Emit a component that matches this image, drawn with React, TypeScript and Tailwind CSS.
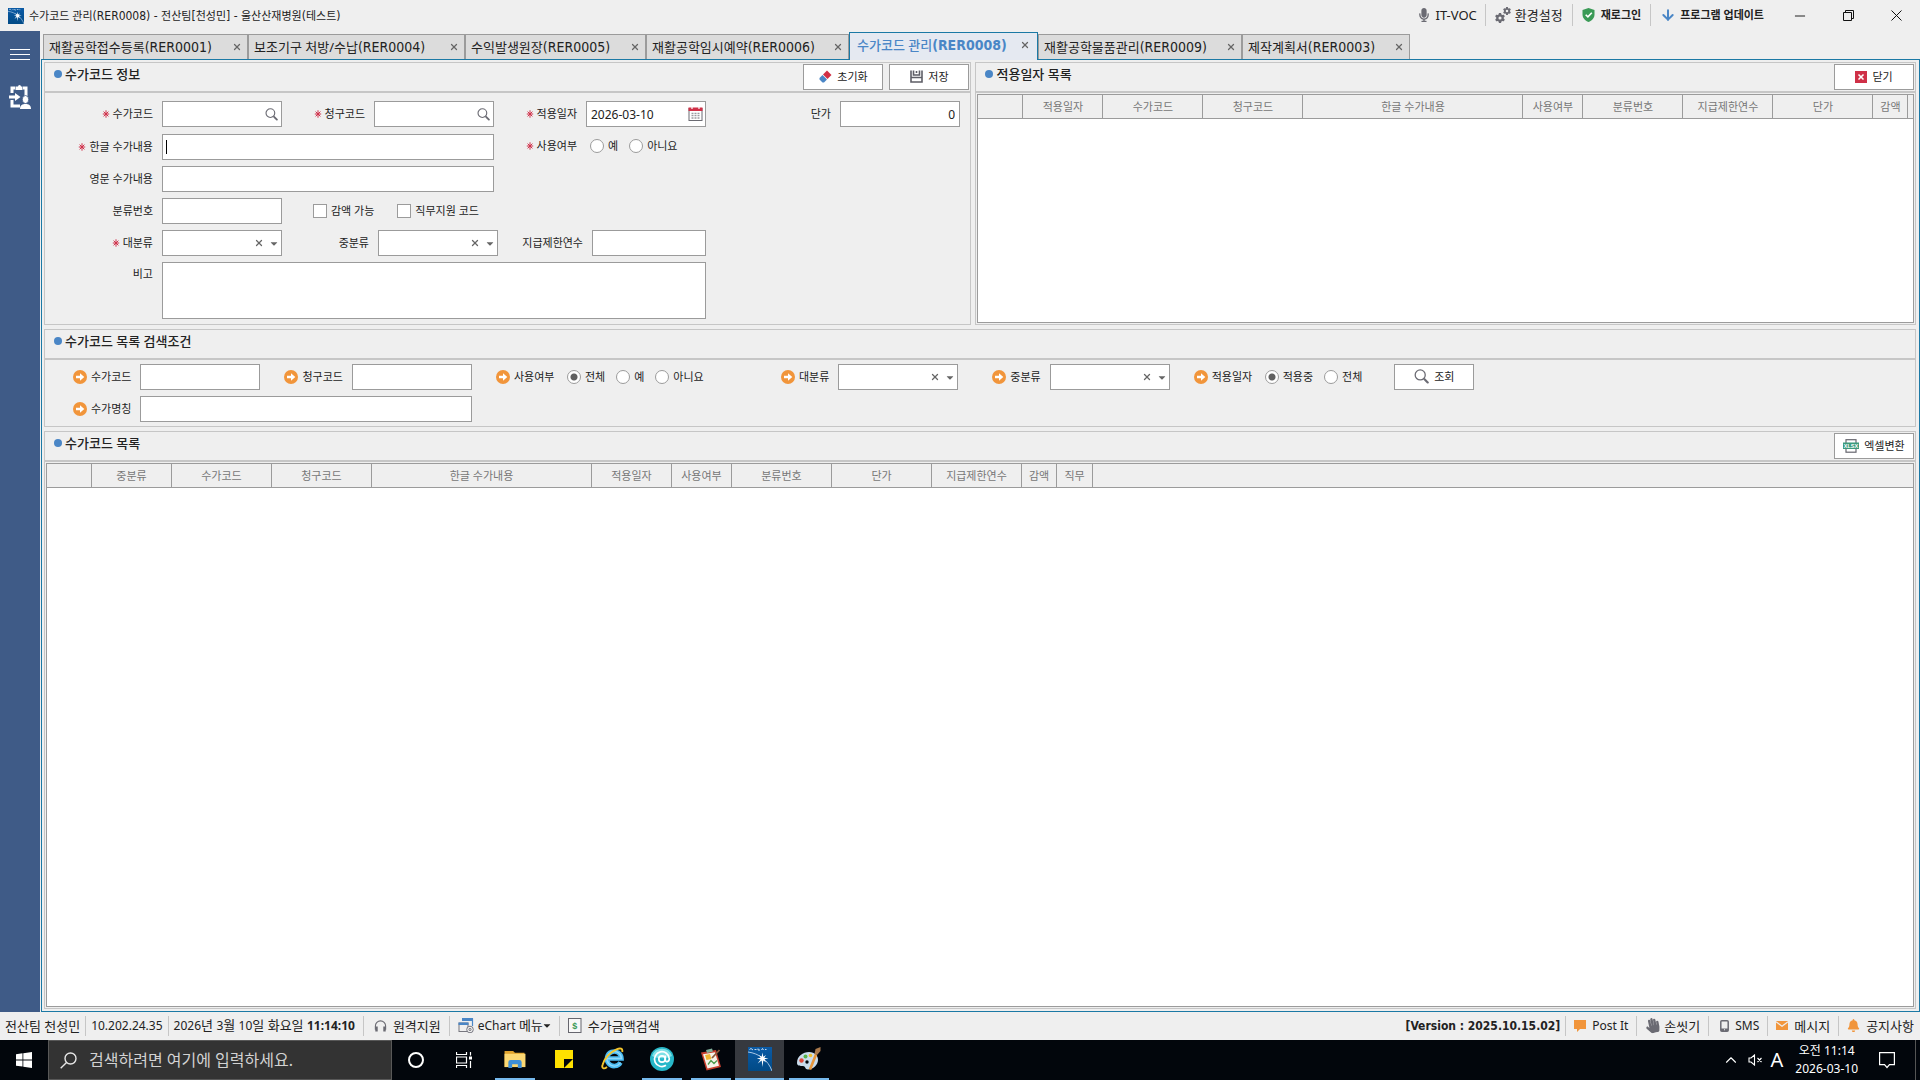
import type { ReactNode } from "react";
import { ArrowDown, X, Minus, ChevronUp } from "lucide-react";
import { FaMicrophone, FaHandPaper, FaBell, FaCaretDown } from "react-icons/fa";
import { FaGear } from "react-icons/fa6";

/* ---------- icons ---------- */

function AppIcon({ className }: { className: string }) {
  return (
    <svg viewBox="0 0 24 24" className={className} aria-hidden="true">
      <defs>
        <linearGradient id="appBlue" x1="0" y1="0" x2="0" y2="1">
          <stop offset="0" stopColor="#0b5ba6" />
          <stop offset="1" stopColor="#014a86" />
        </linearGradient>
      </defs>
      <rect width="24" height="24" fill="url(#appBlue)" />
      <path d="M1.500 2.500l1.500-1 2 1.500M6.500 2.500h2M10 1.500v1.500h2M13.500 3l1-1.500 1 1.500M17 2.500h1.500" stroke="#dcebf8" strokeWidth=".9" fill="none" />
      <path d="M0 5c11 1.500 20 8 24 19" stroke="#a9c6e4" strokeWidth="1" fill="none" />
      <path d="M14.500 5.500l.8 4.200 2.700-1.700-1.700 2.700 4.200.8-4.200.8 2 3.200-3-2-.8 6.500-.8-6.500-4 3 2.900-4.100-3.800-.9 3.800-.8-1.700-2.700 2.800 1.700z" fill="#fff" />
    </svg>
  );
}

function Asterisk() {
  return (
    <svg viewBox="0 0 8 8" className="h-[8px] w-[8px] shrink-0" stroke="#d0304a" aria-hidden="true">
      <path d="M4 .3v7.400M.8 4h6.400M1.600 1.600l4.800 4.800M6.400 1.600L1.600 6.400" />
    </svg>
  );
}

function Lens({ className }: { className: string }) {
  return (
    <svg viewBox="0 0 14 14" className={className} fill="none" stroke="#6b6b73" strokeLinecap="round" aria-hidden="true">
      <circle cx="5.800" cy="5.500" r="4.700" strokeWidth="1.200" />
      <path d="M9.800 9.500l3 3" strokeWidth="2" />
    </svg>
  );
}

function GearPair() {
  return (
    <span className="relative h-[16px] w-[16px] text-[#6b6b73]">
      <FaGear className="absolute bottom-0 left-0 h-[10px] w-[10px]" />
      <FaGear className="absolute top-0 right-0 h-[8px] w-[8px]" />
    </span>
  );
}

function ShieldIcon() {
  return (
    <svg viewBox="0 0 13 14" className="h-[14px] w-[13px]" aria-hidden="true">
      <path d="M6.500 0l6 2v4.500c0 3.500-2.500 6-6 7.500-3.500-1.500-6-4-6-7.500V2z" fill="#3a9a56" />
      <path d="M3.700 6.700l2.200 2.200 3.900-4.100" fill="none" stroke="#fff" strokeWidth="1.600" />
    </svg>
  );
}

function EraserIcon() {
  return (
    <svg viewBox="0 0 13 13" className="h-[13px] w-[13px]" aria-hidden="true">
      <path d="M8 .5L12.500 5 8.500 9 4 4.500z" fill="#d22f45" />
      <path d="M3.500 5L8 9.500 5 12.500H3.500L.5 9.500V8z" fill="#4a86c6" />
    </svg>
  );
}

function SaveIcon() {
  return (
    <svg viewBox="0 0 13 13" className="h-[13px] w-[13px]" fill="none" stroke="#5e5e66" strokeWidth="1.600" aria-hidden="true">
      <path d="M1 .5v11.500h11V.5M3.500.5v4.500h6V.5M1 7.500h11M6.500 1v2" />
    </svg>
  );
}

function CalendarIcon() {
  return (
    <svg viewBox="0 0 15 15" className="h-[15px] w-[15px]" aria-hidden="true">
      <rect x="1" y="2.500" width="13" height="12" fill="#fff" stroke="#6b6b72" />
      <path d="M.5 1.500h14v3.500H.5z" fill="#cf3047" />
      <path d="M4 0v3M11 0v3" stroke="#fff" strokeWidth="1.200" />
      <path d="M3.500 7.500h8M3.500 9.700h8M3.500 12h8" stroke="#9a9aa0" strokeWidth="1.300" strokeDasharray="2 1" />
    </svg>
  );
}

function ExcelIcon() {
  return (
    <svg viewBox="0 0 16 14" className="h-[14px] w-[16px]" aria-hidden="true">
      <rect x="3" y=".7" width="10" height="12.500" fill="#fff" stroke="#66666e" strokeWidth="1.200" />
      <rect x="0" y="3.500" width="16" height="6.500" fill="#3c9a7c" />
      <text x="8" y="8.700" fontSize="5.500" fontWeight="700" textAnchor="middle" fill="#fff" fontFamily="Liberation Sans">XLSX</text>
    </svg>
  );
}

function ArrowBullet() {
  return (
    <svg viewBox="0 0 14 14" className="h-[14px] w-[14px] shrink-0" aria-hidden="true">
      <circle cx="7" cy="7" r="7" fill="#f1953b" />
      <path d="M3 5.800h4V3.200L11.300 7 7 10.800V8.200H3z" fill="#fff" />
    </svg>
  );
}

function ProgramIcon() {
  return (
    <svg viewBox="0 0 22 24" className="h-[24px] w-[22px]" aria-hidden="true">
      <path d="M3 8V3h3M3 15v6h8M14 3h3v8" fill="none" stroke="#fff" strokeWidth="3" />
      <path d="M6.500 1.500h2.500a1.500 1.500 0 0 1 3 0h1.500V5h-7z" fill="#fff" />
      <path d="M0 10.500h6V8l5.500 4L6 16v-2.500H0z" fill="#fff" />
      <ellipse cx="16.500" cy="14.500" rx="3.200" ry="4" fill="#fff" stroke="#3f5b87" strokeWidth=".8" />
      <path d="M11 24c0-4 2.500-5 5.500-5s5.500 1 5.500 5z" fill="#fff" />
    </svg>
  );
}

function HeadphoneIcon() {
  return (
    <svg viewBox="0 0 14 14" className="h-[14px] w-[13px]" fill="none" stroke="#6b6b73" aria-hidden="true">
      <path d="M1.500 11V7a5.500 5.500 0 0 1 11 0v4" strokeWidth="1.200" />
      <path d="M2.700 7.500v5.500M11.300 7.500v5.500" strokeWidth="2.600" />
    </svg>
  );
}

function ChartMenuIcon() {
  return (
    <svg viewBox="0 0 16 15" className="h-[15px] w-[16px]" fill="none" aria-hidden="true">
      <path d="M4.500 1h10v7" stroke="#4a86c6" strokeWidth="1.200" />
      <path d="M4 0h11v3H4z" fill="#4a86c6" />
      <rect x="1" y="5" width="9" height="8.500" fill="#efefef" stroke="#77777f" />
      <path d="M.5 4.500h10V7H.5z" fill="#4a86c6" />
      <circle cx="12" cy="11.500" r="3.300" fill="#efefef" stroke="#777780" />
      <circle cx="12" cy="11.500" r="1.100" stroke="#777780" />
    </svg>
  );
}

function ExplorerIcon() {
  return (
    <svg viewBox="0 0 22 20" className="h-[19px] w-[22px]" aria-hidden="true">
      <path d="M0 1h9l2 2h10v15H0z" fill="#e0a32e" />
      <path d="M0 4h22v14H0z" fill="#fbd773" />
      <path d="M4 19v-6q0-2.500 2.500-2.500h9Q18 10.500 18 13v6h-4v-4H8v4z" fill="#3e8fd8" />
    </svg>
  );
}

function BrowserIcon() {
  return (
    <svg viewBox="0 0 24 24" className="h-[24px] w-[24px]" fill="none" aria-hidden="true">
      <path d="M19.500 15.500a7.300 7.300 0 1 1 1-4H6.500" stroke="#4bbcf2" strokeWidth="4.600" />
      <path d="M19.500 15.500a7.300 7.300 0 1 1 1-4H6.500" stroke="#8fd8fa" strokeWidth="1.400" />
      <path d="M6 20c-3 2.500-5.500 1.500-4.500-2C3 12 9 5 15.500 2.300c4-1.700 6.500-.8 5.700 2.700" stroke="#f4c52c" strokeWidth="1.900" />
    </svg>
  );
}

function MailAtIcon() {
  return (
    <svg viewBox="0 0 24 24" className="h-[24px] w-[24px]" aria-hidden="true">
      <circle cx="12" cy="12" r="12" fill="#27b7c9" />
      <path d="M2 9a10.500 10.500 0 0 1 20 0c-6 3-14 3-20 0z" fill="#7fe0e6" />
      <g fill="none" stroke="#fff" strokeWidth="1.700">
        <circle cx="12" cy="12" r="3.200" />
        <path d="M15.300 8.500v4.300c0 3 4 2.200 4-1A7.400 7.400 0 1 0 16 18.300" />
      </g>
    </svg>
  );
}

function ClipboardPadIcon() {
  return (
    <svg viewBox="0 0 22 23" className="h-[23px] w-[22px]" aria-hidden="true">
      <path d="M1 4.500l15-2.500 5 17-14.500 3.500z" fill="#c9402f" />
      <path d="M3 6.300l12-2 4 13.500-11.500 2.700z" fill="#f5f3ea" />
      <path d="M6 2l6-1.500 1 3-6 1.500z" fill="#7fae9a" />
      <path d="M5 7l5-1 1.500 5-5 1z" fill="#f2b632" />
      <path d="M8 16.500l3-4 3 3 3-3" fill="none" stroke="#4c9a4c" strokeWidth="1.300" />
      <path d="M12 10l7.500-8" stroke="#8a5a3a" strokeWidth="1.800" />
    </svg>
  );
}

function PaintIcon() {
  return (
    <svg viewBox="0 0 24 24" className="h-[24px] w-[24px]" aria-hidden="true">
      <path d="M0 16C0 9 6 5 12 5s9 4 9 8-4 9.500-10 9.500c-3 0-2.500-3.500-5-3.500s-6 0-6-3z" fill="#c9dced" />
      <circle cx="4.500" cy="13.500" r="2.200" fill="#e04a3a" />
      <circle cx="8.500" cy="9.500" r="2" fill="#55b24a" />
      <circle cx="13.500" cy="8.500" r="1.800" fill="#f0c030" />
      <circle cx="10" cy="15" r="1.700" fill="#02060c" />
      <path d="M13 22.500l6-15" stroke="#e8973c" strokeWidth="2.600" />
      <path d="M17.500 7l1-5 5-2v4l-3.500 4z" fill="#a9794c" />
    </svg>
  );
}

function TaskViewIcon() {
  return (
    <svg viewBox="0 0 16 16" className="h-[16px] w-[16px]" fill="none" stroke="#fff" aria-hidden="true">
      <path d="M.5 0v2.500h10V0M.5 16v-2.500h10V16M.5 5h10v6H.5zM14.500 0v3.500M14.500 9v7" strokeWidth="1.200" />
      <path d="M13 4.500h3v3h-3z" fill="#fff" stroke="none" />
    </svg>
  );
}

/* ---------- small building blocks ---------- */

const hangul = "font-['Noto_Sans','Noto_Sans_CJK_KR',sans-serif]";

function Wide({ children, className = "" }: { children: ReactNode; className?: string }) {
  return <span className={`font-['DejaVu_Sans_Condensed','DejaVu_Sans',sans-serif] ${className}`}>{children}</span>;
}

const box = "h-[26px] border border-[#9b9b9b] bg-white px-1 text-xs text-[#222] outline-none";

function Label({ htmlFor, required, className = "", children }: { htmlFor?: string; required?: boolean; className?: string; children: ReactNode }) {
  return (
    <label htmlFor={htmlFor} className={`mr-[9px] flex shrink-0 items-center justify-end gap-[3px] whitespace-nowrap ${className}`}>
      {required && <Asterisk />}
      {children}
    </label>
  );
}

function SearchField({ id }: { id: string }) {
  return (
    <div className="relative flex w-[120px] shrink-0">
      <input id={id} type="text" className={`w-full pr-6 ${box}`} />
      <button type="button" aria-label="찾기" className="absolute top-[7px] right-[4px]">
        <Lens className="h-[13px] w-[13px]" />
      </button>
    </div>
  );
}

function Combo({ id }: { id: string }) {
  return (
    <div className="relative flex w-[120px] shrink-0">
      <select id={id} className={`w-full appearance-none ${box}`} defaultValue="">
        <option value=""></option>
      </select>
      <button type="button" aria-label="지우기" className="absolute top-[8px] right-[18px] text-[#666]">
        <X className="h-[10px] w-[10px]" strokeWidth={3} />
      </button>
      <FaCaretDown className="pointer-events-none absolute top-[8px] right-[4px] h-[11px] w-[8px] text-[#666]" />
    </div>
  );
}

function Radio({ name, label, checked = false }: { name: string; label: string; checked?: boolean }) {
  return (
    <label className="flex shrink-0 items-center gap-1 whitespace-nowrap">
      <input
        type="radio"
        name={name}
        defaultChecked={checked}
        className="h-[14px] w-[14px] appearance-none rounded-full border border-[#9b9b9b] bg-white checked:bg-[radial-gradient(#606060_0_3px,#fff_4px)]"
      />
      {label}
    </label>
  );
}

function Check({ label }: { label: string }) {
  return (
    <label className="flex shrink-0 items-center gap-1 whitespace-nowrap">
      <input type="checkbox" className="h-[14px] w-[14px] appearance-none border border-[#9b9b9b] bg-white" />
      {label}
    </label>
  );
}

function SearchLabel({ htmlFor, className = "", children }: { htmlFor?: string; className?: string; children: ReactNode }) {
  return (
    <label htmlFor={htmlFor} className={`mr-[9px] flex shrink-0 items-center gap-1 whitespace-nowrap ${className}`}>
      <ArrowBullet />
      {children}
    </label>
  );
}

function ActionButton({ icon, children }: { icon: ReactNode; children: ReactNode }) {
  return (
    <button type="button" className="flex h-[26px] w-[80px] shrink-0 items-center justify-center gap-[5px] border border-[#9b9b9b] bg-white pb-px whitespace-nowrap">
      {icon}
      {children}
    </button>
  );
}

function Panel({ title, actions, className = "", children }: { title: string; actions?: ReactNode; className?: string; children: ReactNode }) {
  return (
    <section className={`flex min-w-0 flex-col border border-[#c6c6c6] ${className}`}>
      <header className="flex h-[30px] shrink-0 items-center border-b-2 border-[#c6c6c6] pr-px pl-[9px]">
        <span className="mb-1.5 h-[8px] w-[8px] rounded-full bg-[#4a86c6]" />
        <h2 className="mb-1.5 ml-[3px] text-[13px] leading-5 font-medium text-[#222]">{title}</h2>
        <div className="ml-auto flex gap-1.5">{actions}</div>
      </header>
      {children}
    </section>
  );
}

type Column = { name: string; width: string };

function DataGrid({ columns, className = "" }: { columns: Column[]; className?: string }) {
  return (
    <div className={`flex-1 overflow-hidden border border-[#9b9b9b] bg-white ${className}`}>
      <table className="w-full table-fixed border-separate border-spacing-0">
        <thead>
          <tr className="h-[24px] bg-[#efefef] text-[#777]">
            {columns.map((c, i) => (
              <th key={i} scope="col" className={`border-r border-b border-[#9b9b9b] p-0 font-normal whitespace-nowrap ${c.width}`}>
                {c.name}
              </th>
            ))}
            <th className="border-b border-[#9b9b9b] p-0" />
          </tr>
        </thead>
        <tbody />
      </table>
    </div>
  );
}

/* ---------- data ---------- */

const tabs = [
  { name: "재활공학접수등록", code: "(RER0001)", width: "w-[205px]" },
  { name: "보조기구 처방/수납", code: "(RER0004)", width: "w-[217px]" },
  { name: "수익발생원장", code: "(RER0005)", width: "w-[181px]" },
  { name: "재활공학임시예약", code: "(RER0006)", width: "w-[203px]" },
  { name: "수가코드 관리", code: "(RER0008)", width: "w-[189px]", active: true },
  { name: "재활공학물품관리", code: "(RER0009)", width: "w-[204px]" },
  { name: "제작계획서", code: "(RER0003)", width: "w-[168px]" },
];

const dateColumns: Column[] = [
  { name: "", width: "w-[45px]" },
  { name: "적용일자", width: "w-[80px]" },
  { name: "수가코드", width: "w-[100px]" },
  { name: "청구코드", width: "w-[100px]" },
  { name: "한글 수가내용", width: "w-[220px]" },
  { name: "사용여부", width: "w-[60px]" },
  { name: "분류번호", width: "w-[100px]" },
  { name: "지급제한연수", width: "w-[90px]" },
  { name: "단가", width: "w-[100px]" },
  { name: "감액", width: "w-[35px]" },
];

const codeColumns: Column[] = [
  { name: "", width: "w-[45px]" },
  { name: "중분류", width: "w-[80px]" },
  { name: "수가코드", width: "w-[100px]" },
  { name: "청구코드", width: "w-[100px]" },
  { name: "한글 수가내용", width: "w-[220px]" },
  { name: "적용일자", width: "w-[80px]" },
  { name: "사용여부", width: "w-[60px]" },
  { name: "분류번호", width: "w-[100px]" },
  { name: "단가", width: "w-[100px]" },
  { name: "지급제한연수", width: "w-[90px]" },
  { name: "감액", width: "w-[35px]" },
  { name: "직무", width: "w-[36px]" },
];

const taskApps = [
  { name: "파일 탐색기", icon: <ExplorerIcon />, open: true },
  { name: "스티커 메모", icon: <svg viewBox="0 0 18 18" className="h-[18px] w-[18px]"><path d="M0 0h18v18H0z" fill="#ffe100" /><path d="M9 18V9h9z" fill="#02060c" /></svg>, open: false },
  { name: "인터넷", icon: <BrowserIcon />, open: false },
  { name: "메일", icon: <MailAtIcon />, open: true },
  { name: "메모장", icon: <ClipboardPadIcon />, open: true },
  { name: "수가코드 관리", icon: <AppIcon className="h-[24px] w-[24px]" />, open: true, active: true },
  { name: "그림판", icon: <PaintIcon />, open: true },
];

/* ---------- page sections ---------- */

function TitleBar() {
  const item = "flex items-center whitespace-nowrap";
  const bar = "h-[22px] w-px bg-[#c6c6c6]";
  return (
    <header className="flex h-[31px] shrink-0 items-center pl-2">
      <AppIcon className="h-[16px] w-[16px]" />
      <h1 className="ml-[5px] whitespace-nowrap">
        수가코드 관리<Wide className="text-xs">(RER0008) - </Wide>전산팀<Wide className="text-xs">[</Wide>천성민<Wide className="text-xs">] - </Wide>울산산재병원<Wide className="text-xs">(</Wide>테스트<Wide className="text-xs">)</Wide>
      </h1>
      <nav className="ml-auto flex items-center pb-px text-[13px]">
        <button type="button" className={`${item} gap-1.5 pr-2`}>
          <FaMicrophone className="h-[14px] w-[12px] text-[#6b6b73]" />
          IT-VOC
        </button>
        <span className={bar} />
        <button type="button" className={`${item} gap-1 px-[9px]`}>
          <GearPair />
          환경설정
        </button>
        <span className={bar} />
        <button type="button" className={`${item} gap-1.5 px-[9px] text-[11px] font-bold`}>
          <ShieldIcon />
          재로그인
        </button>
        <span className={bar} />
        <button type="button" className={`${item} gap-1 pr-3 pl-[9px] text-[11px] font-bold`}>
          <ArrowDown className="h-[16px] w-[16px] text-[#4a86c6]" strokeWidth={3} />
          프로그램 업데이트
        </button>
      </nav>
      <div className="flex self-stretch">
        <button type="button" aria-label="최소화" className="grid w-[48px] place-items-center">
          <Minus className="h-[16px] w-[16px]" strokeWidth={1.5} />
        </button>
        <button type="button" aria-label="이전 크기로" className="grid w-[48px] place-items-center">
          <svg viewBox="0 0 11 11" className="h-[11px] w-[11px]" fill="none" stroke="#111" aria-hidden="true">
            <path d="M.5 2.500h8v8h-8zM2.500 2.500v-2h8v8h-2" />
          </svg>
        </button>
        <button type="button" aria-label="창 닫기" className="grid w-[48px] place-items-center">
          <svg viewBox="0 0 11 11" className="h-[11px] w-[11px]" stroke="#111" aria-hidden="true">
            <path d="M.5.5l10 10M10.500.5l-10 10" />
          </svg>
        </button>
      </div>
    </header>
  );
}

function TabStrip() {
  return (
    <div role="tablist" className="relative z-10 -mb-px flex h-[29px] items-end pl-0.5 text-[13px]">
      {tabs.map((t) =>
        t.active ? (
          <div key={t.code} className={`flex h-[28px] shrink-0 items-center justify-between border border-b-0 border-[#1b79a5] bg-[#e5e9f1] pr-[7px] pb-1 pl-[7px] font-medium text-[#4a86c6] ${t.width}`}>
            <button type="button" role="tab" aria-selected="true" className="whitespace-nowrap">
              {t.name}<Wide className="text-sm font-bold">{t.code}</Wide>
            </button>
            <button type="button" aria-label="탭 닫기"><X className="h-[10px] w-[10px] text-[#666]" strokeWidth={3} /></button>
          </div>
        ) : (
          <div key={t.code} className={`mb-px flex h-[25px] shrink-0 items-center justify-between border border-b-0 border-[#9b9b9b] bg-[#dcdcdc] pr-[5px] pl-[5px] ${t.width}`}>
            <button type="button" role="tab" aria-selected="false" className="whitespace-nowrap">
              {t.name}<Wide className="text-sm">{t.code}</Wide>
            </button>
            <button type="button" aria-label="탭 닫기"><X className="h-[10px] w-[10px] text-[#666]" strokeWidth={3} /></button>
          </div>
        ),
      )}
    </div>
  );
}

function CodeForm() {
  return (
    <form className="flex flex-col gap-1.5 pt-2 pb-[5px]">
      <div className="mb-px flex">
        <Label htmlFor="code" required className="w-[108px]">수가코드</Label>
        <SearchField id="code" />
        <Label htmlFor="claim" required className="w-[83px]">청구코드</Label>
        <SearchField id="claim" />
        <Label htmlFor="applyDate" required className="w-[83px]">적용일자</Label>
        <div className="relative flex w-[120px] shrink-0">
          <input id="applyDate" type="text" defaultValue="2026-03-10" className={`w-full ${box}`} />
          <button type="button" aria-label="달력" className="absolute top-[5px] right-[3px]"><CalendarIcon /></button>
        </div>
        <Label htmlFor="price" className="w-[125px]">단가</Label>
        <input id="price" type="text" defaultValue="0" className={`w-[120px] shrink-0 text-right ${box}`} />
      </div>
      <div className="flex">
        <Label htmlFor="nameKo" required className="w-[108px]">한글 수가내용</Label>
        <div className="relative flex w-[332px] shrink-0">
          <input id="nameKo" type="text" className={`w-full ${box}`} />
          <span className="pointer-events-none absolute top-[6px] left-[4px] h-[14px] w-px bg-black" />
        </div>
        <div role="radiogroup" aria-label="사용여부" className="flex pb-0.5">
          <Label required className="w-[83px]">사용여부</Label>
          <div className="ml-1 flex gap-[11px]">
            <Radio name="use" label="예" />
            <Radio name="use" label="아니요" />
          </div>
        </div>
      </div>
      <div className="flex">
        <Label htmlFor="nameEn" className="w-[108px]">영문 수가내용</Label>
        <input id="nameEn" type="text" className={`w-[332px] ${box}`} />
      </div>
      <div className="flex">
        <Label htmlFor="classNo" className="w-[108px]">분류번호</Label>
        <input id="classNo" type="text" className={`w-[120px] ${box}`} />
        <div className="ml-[31px] flex gap-[23px]">
          <Check label="감액 가능" />
          <Check label="직무지원 코드" />
        </div>
      </div>
      <div className="flex">
        <Label htmlFor="major" required className="w-[108px]">대분류</Label>
        <Combo id="major" />
        <Label htmlFor="minor" className="w-[87px]">중분류</Label>
        <Combo id="minor" />
        <Label htmlFor="limit" className="w-[85px]">지급제한연수</Label>
        <input id="limit" type="text" className={`w-[114px] ${box}`} />
      </div>
      <div className="flex items-start">
        <Label htmlFor="memo" className="h-[24px] w-[108px]">비고</Label>
        <textarea id="memo" className="h-[57px] w-[544px] resize-none border border-[#9b9b9b] bg-white p-1 text-xs outline-none" />
      </div>
    </form>
  );
}

function SearchForm() {
  return (
    <form className="flex flex-col gap-1.5 pt-1 pb-1 pl-7">
      <div className="flex">
        <SearchLabel htmlFor="qCode">수가코드</SearchLabel>
        <input id="qCode" type="text" className={`w-[120px] shrink-0 ${box}`} />
        <SearchLabel htmlFor="qClaim" className="ml-6">청구코드</SearchLabel>
        <input id="qClaim" type="text" className={`w-[120px] shrink-0 ${box}`} />
        <SearchLabel className="ml-6 w-[62px]">사용여부</SearchLabel>
        <div className="flex w-[214px] shrink-0 gap-[11px]">
          <Radio name="qUse" label="전체" checked />
          <Radio name="qUse" label="예" />
          <Radio name="qUse" label="아니요" />
        </div>
        <SearchLabel htmlFor="qMajor">대분류</SearchLabel>
        <Combo id="qMajor" />
        <SearchLabel htmlFor="qMinor" className="ml-[34px]">중분류</SearchLabel>
        <Combo id="qMinor" />
        <SearchLabel className="ml-6 w-[62px]">적용일자</SearchLabel>
        <div className="mr-8 flex shrink-0 gap-[11px]">
          <Radio name="qApply" label="적용중" checked />
          <Radio name="qApply" label="전체" />
        </div>
        <ActionButton icon={<Lens className="h-[15px] w-[15px]" />}>조회</ActionButton>
      </div>
      <div className="flex">
        <SearchLabel htmlFor="qName">수가명칭</SearchLabel>
        <input id="qName" type="text" className={`w-[332px] ${box}`} />
      </div>
    </form>
  );
}

function StatusBar() {
  const bar = "h-[20px] w-px shrink-0 bg-[#c6c6c6]";
  const item = "flex items-center gap-1.5 px-2 whitespace-nowrap";
  return (
    <footer className="flex h-[28px] shrink-0 items-center pb-px text-[13px]">
      <span className="px-[5px] whitespace-nowrap">전산팀 천성민</span>
      <span className={bar} />
      <span className="px-[5px] text-xs">10.202.24.35</span>
      <span className={bar} />
      <span className="pr-2 pl-[5px] whitespace-nowrap">
        <span className="text-xs">2026</span>년 <span className="text-xs">3</span>월 <span className="text-xs">10</span>일 화요일 <b className="text-xs">11:14:10</b>
      </span>
      <span className={bar} />
      <button type="button" className={`${item} pl-[10px]`}><HeadphoneIcon />원격지원</button>
      <span className={bar} />
      <button type="button" className="flex items-center gap-1 px-2 whitespace-nowrap">
        <ChartMenuIcon />
        <span><span className="text-xs">eChart</span> 메뉴</span>
        <FaCaretDown className="-ml-1 h-[11px] w-[8px]" />
      </button>
      <span className={bar} />
      <button type="button" className={item}>
        <svg viewBox="0 0 14 15" className="h-[15px] w-[14px]" aria-hidden="true">
          <rect x=".5" y=".5" width="12.500" height="14" fill="#f8f8f8" stroke="#66666e" />
          <text x="6.800" y="11" fontSize="9" fontWeight="700" textAnchor="middle" fill="#3a9a56" fontFamily="Liberation Sans">$</text>
        </svg>
        수가금액검색
      </button>
      <Wide className="ml-auto pr-[5px] text-xs font-bold whitespace-nowrap">[Version : 2025.10.15.02]</Wide>
      <span className={bar} />
      <button type="button" className={`${item} text-xs`}>
        <svg viewBox="0 0 12 12" className="h-[12px] w-[12px]" aria-hidden="true"><path d="M0 0h12v9H6l-3 3V9H0z" fill="#f1953b" /></svg>
        Post It
      </button>
      <span className={bar} />
      <button type="button" className="flex items-center gap-1 px-2 whitespace-nowrap">
        <FaHandPaper className="h-[15px] w-[15px] -rotate-12 text-[#6b6b73]" />손씻기
      </button>
      <span className={bar} />
      <button type="button" className={`${item} pl-[11px] text-xs`}>
        <svg viewBox="0 0 9 12" className="h-[12px] w-[9px]" aria-hidden="true">
          <rect x=".8" y=".8" width="7.400" height="10.400" rx="1" fill="none" stroke="#6b6b73" strokeWidth="1.500" />
          <path d="M1 8.500h7v2.500H1z" fill="#6b6b73" />
          <path d="M4 9.200h1v1H4z" fill="#efefef" />
        </svg>
        SMS
      </button>
      <span className={bar} />
      <button type="button" className={item}>
        <svg viewBox="0 0 12 9" className="h-[9px] w-[12px]" aria-hidden="true">
          <path d="M0 0h12v9H0z" fill="#f1953b" />
          <path d="M0 .8l6 4.400L12 .8" fill="none" stroke="#efefef" strokeWidth="1.200" />
        </svg>
        메시지
      </button>
      <span className={bar} />
      <button type="button" className={`${item} pr-1.5`}><FaBell className="h-[13px] w-[13px] text-[#f1953b]" />공지사항</button>
    </footer>
  );
}

function Taskbar() {
  return (
    <div className="flex h-[40px] shrink-0 items-stretch bg-[#02060c] text-white">
      <button type="button" aria-label="시작" className="grid w-[48px] shrink-0 place-items-center">
        <svg viewBox="0 0 16 16" className="h-[16px] w-[16px]" fill="#fff" aria-hidden="true">
          <path d="M0 2.200l6.500-.9v6.200H0zM7.300 1.200L16 0v7.500H7.300zM0 8.400h6.500v6.200L0 13.700zM7.300 8.400H16V16l-8.700-1.200z" />
        </svg>
      </button>
      <div className="flex w-[344px] items-center gap-3 border border-[#585858] bg-[#333] pl-[11px]">
        <svg viewBox="0 0 17 17" className="h-[17px] w-[17px] shrink-0" fill="none" stroke="#e6e6e6" strokeWidth="1.400" aria-hidden="true">
          <circle cx="10.500" cy="6.500" r="5.500" />
          <path d="M6.500 10.500L.7 16.300" />
        </svg>
        <input type="text" aria-label="검색" placeholder="검색하려면 여기에 입력하세요." className="min-w-0 flex-1 bg-transparent text-base text-white outline-none placeholder:text-[#d2d2d2]" />
      </div>
      <button type="button" aria-label="음성 도우미" className="grid w-[48px] shrink-0 place-items-center">
        <span className="h-[16px] w-[16px] rounded-full border-2 border-white" />
      </button>
      <button type="button" aria-label="작업 보기" className="mr-0.5 grid w-[48px] shrink-0 place-items-center"><TaskViewIcon /></button>
      {taskApps.map((a) => (
        <button key={a.name} type="button" aria-label={a.name} className={`flex w-[49px] shrink-0 flex-col items-center ${a.active ? "bg-[#36393f]" : ""}`}>
          <span className="grid h-[38px] place-items-center">{a.icon}</span>
          {a.open && <span className={`h-[2px] bg-[#76b9ed] ${a.active ? "w-full" : "w-[40px]"}`} />}
        </button>
      ))}
      <div className="ml-auto flex items-center">
        <button type="button" aria-label="숨겨진 아이콘" className="mr-2"><ChevronUp className="h-[18px] w-[18px]" strokeWidth={1.5} /></button>
        <svg viewBox="0 0 15 12" className="h-[12px] w-[15px]" fill="none" stroke="#fff" aria-hidden="true">
          <path d="M1 4h2l3.500-3v10L3 8H1zM9.500 4l4 4M13.500 4l-4 4" strokeWidth="1.100" />
        </svg>
        <span className="ml-2 text-xl">A</span>
        <time className="ml-3 text-center text-xs leading-[18px] whitespace-nowrap">오전 11:14<br />2026-03-10</time>
        <button type="button" aria-label="알림" className="mr-5 ml-[21px]">
          <svg viewBox="0 0 16 17" className="h-[17px] w-[16px]" fill="none" stroke="#fff" strokeWidth="1.200" aria-hidden="true">
            <path d="M.6.6h14.800v12h-4.900L8 15.500 5.500 12.600H.6z" />
          </svg>
        </button>
        <span className="mr-1 h-full w-px bg-[#555]" />
      </div>
    </div>
  );
}

export default function App() {
  return (
    <div className={`flex h-screen flex-col overflow-hidden bg-[#efefef] text-[11px] leading-4 text-[#222] ${hangul}`}>
      <TitleBar />
      <div className="flex min-h-0 flex-1">
        <aside className="flex w-[40px] shrink-0 flex-col items-center gap-6 bg-[#3f5b87] pt-[17px]">
          <button type="button" aria-label="메뉴">
            <svg viewBox="0 0 20 13" className="h-[13px] w-[20px]" stroke="#fff" aria-hidden="true">
              <path d="M0 1.500h20M0 6.500h20M0 11.500h20" />
            </svg>
          </button>
          <button type="button" aria-label="프로그램 목록"><ProgramIcon /></button>
        </aside>
        <div className="ml-px flex min-w-0 flex-1 flex-col">
          <TabStrip />
          <main className="flex min-h-0 flex-1 flex-col gap-1 border border-[#1b79a5] py-0.5 pr-[3px] pl-0.5">
            <div className="grid grid-cols-[927fr_940fr] gap-1">
              <Panel
                title="수가코드 정보"
                actions={
                  <>
                    <ActionButton icon={<EraserIcon />}>초기화</ActionButton>
                    <ActionButton icon={<SaveIcon />}>저장</ActionButton>
                  </>
                }
              >
                <CodeForm />
              </Panel>
              <Panel
                title="적용일자 목록"
                actions={
                  <ActionButton icon={<span className="grid h-[12px] w-[12px] place-items-center bg-[#cf3047]"><X className="h-[8px] w-[8px] text-white" strokeWidth={5} /></span>}>
                    닫기
                  </ActionButton>
                }
              >
                <DataGrid columns={dateColumns} className="m-px" />
              </Panel>
            </div>
            <Panel title="수가코드 목록 검색조건">
              <SearchForm />
            </Panel>
            <Panel title="수가코드 목록" className="min-h-0 flex-1" actions={<ActionButton icon={<ExcelIcon />}>엑셀변환</ActionButton>}>
              <DataGrid columns={codeColumns} className="m-px" />
            </Panel>
          </main>
        </div>
      </div>
      <StatusBar />
      <Taskbar />
    </div>
  );
}
